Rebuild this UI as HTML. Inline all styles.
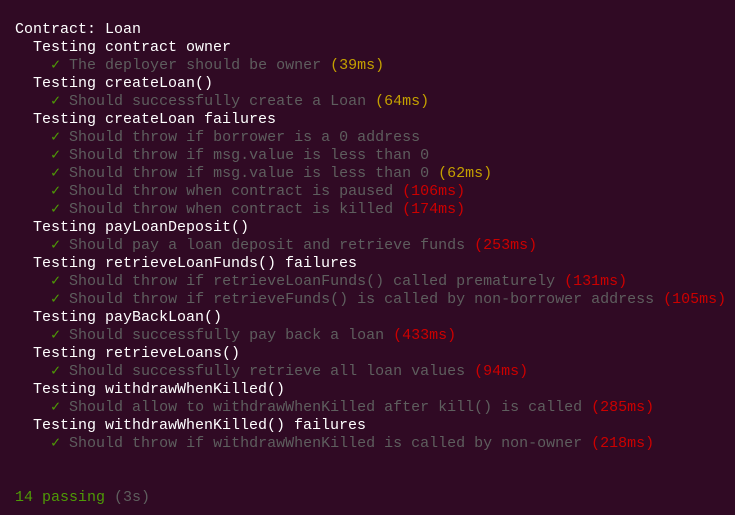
<!DOCTYPE html>
<html><head><style>
html,body{margin:0;padding:0;background:#300a24;width:735px;height:515px;overflow:hidden}
pre{margin:0;position:absolute;left:15px;top:21px;font-family:"Liberation Mono","DejaVu Sans Mono",monospace;font-size:15px;line-height:18px;color:#ffffff}
.g{color:#5e5e5e}.c{color:#4e9a06}.y{color:#c4a000}.r{color:#cc0000}
</style></head><body><pre>Contract: Loan
  Testing contract owner
    <span class="c">✓</span><span class="g"> The deployer should be owner</span> <span class="y">(39ms)</span>
  Testing createLoan()
    <span class="c">✓</span><span class="g"> Should successfully create a Loan</span> <span class="y">(64ms)</span>
  Testing createLoan failures
    <span class="c">✓</span><span class="g"> Should throw if borrower is a 0 address</span>
    <span class="c">✓</span><span class="g"> Should throw if msg.value is less than 0</span>
    <span class="c">✓</span><span class="g"> Should throw if msg.value is less than 0</span> <span class="y">(62ms)</span>
    <span class="c">✓</span><span class="g"> Should throw when contract is paused</span> <span class="r">(106ms)</span>
    <span class="c">✓</span><span class="g"> Should throw when contract is killed</span> <span class="r">(174ms)</span>
  Testing payLoanDeposit()
    <span class="c">✓</span><span class="g"> Should pay a loan deposit and retrieve funds</span> <span class="r">(253ms)</span>
  Testing retrieveLoanFunds() failures
    <span class="c">✓</span><span class="g"> Should throw if retrieveLoanFunds() called prematurely</span> <span class="r">(131ms)</span>
    <span class="c">✓</span><span class="g"> Should throw if retrieveFunds() is called by non-borrower address</span> <span class="r">(105ms)</span>
  Testing payBackLoan()
    <span class="c">✓</span><span class="g"> Should successfully pay back a loan</span> <span class="r">(433ms)</span>
  Testing retrieveLoans()
    <span class="c">✓</span><span class="g"> Should successfully retrieve all loan values</span> <span class="r">(94ms)</span>
  Testing withdrawWhenKilled()
    <span class="c">✓</span><span class="g"> Should allow to withdrawWhenKilled after kill() is called</span> <span class="r">(285ms)</span>
  Testing withdrawWhenKilled() failures
    <span class="c">✓</span><span class="g"> Should throw if withdrawWhenKilled is called by non-owner</span> <span class="r">(218ms)</span>


<span class="c">14 passing</span> <span class="g">(3s)</span>
</pre></body></html>
